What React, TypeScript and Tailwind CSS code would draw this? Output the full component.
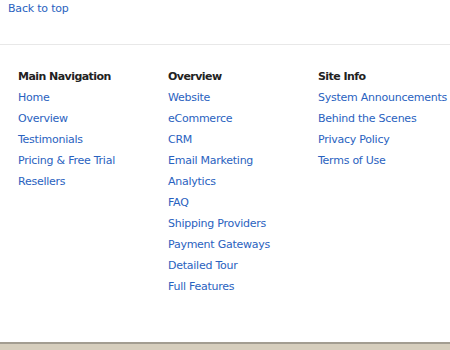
import React from "react";

const cols = [
  { title: "Main Navigation", links: ["Home", "Overview", "Testimonials", "Pricing & Free Trial", "Resellers"] },
  { title: "Overview", links: ["Website", "eCommerce", "CRM", "Email Marketing", "Analytics", "FAQ", "Shipping Providers", "Payment Gateways", "Detailed Tour", "Full Features"] },
  { title: "Site Info", links: ["System Announcements", "Behind the Scenes", "Privacy Policy", "Terms of Use"] },
];

export default function App() {
  return (
    <div className="h-[350px] w-[450px] flex flex-col bg-white overflow-hidden" style={{ fontFamily: '"DejaVu Sans", Verdana, sans-serif' }}>
      <div className="h-[45px] border-b border-[#e8e8e8] px-2">
        <a className="block text-[11px] leading-[18px] tracking-[-0.2px] text-[#2a62c0]">Back to top</a>
      </div>
      <div className="flex pl-[18px] pt-[21px]">
        {cols.map((c) => (
          <div key={c.title} className="w-[150px] shrink-0">
            <div className="text-[11px] leading-[21px] font-bold tracking-[-0.55px] text-[#222]">{c.title}</div>
            {c.links.map((l) => (
              <a key={l} className="block text-[11px] leading-[21px] tracking-[-0.25px] text-[#2a62c0] whitespace-nowrap">{l}</a>
            ))}
          </div>
        ))}
      </div>
      <div className="flex-1" />
      <div className="h-[8px] border-t-2 border-[#a39d91] bg-[#d6cebd]" />
    </div>
  );
}
